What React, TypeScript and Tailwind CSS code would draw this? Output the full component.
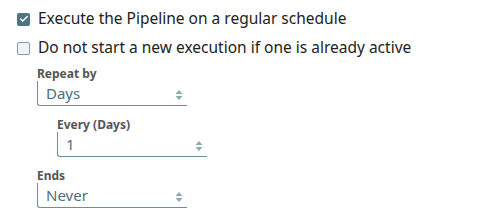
import { Check } from 'lucide-react'

function Arrows() {
  return (
    <svg width="8" height="12" viewBox="0 0 8 12" className="absolute right-1 top-[8px]">
      <path d="M4 1 L7.5 5 L0.5 5 Z" fill="#8fa8b2" />
      <path d="M4 11 L7.5 7 L0.5 7 Z" fill="#8fa8b2" />
    </svg>
  )
}

function Field({ label, value, indent }: { label: string; value: string; indent?: boolean }) {
  return (
    <div className={indent ? 'ml-5' : ''}>
      <p className="text-[12px] font-bold text-[#555] leading-[14px]">{label}</p>
      <div className="relative w-[150px] h-[25px] border-l border-b border-[#6f8e99] rounded-bl-[3px] pl-[8px]">
        <span className="text-[15px] leading-[20px] text-[#4e6d79]">{value}</span>
        <Arrows />
      </div>
    </div>
  )
}

export default function App() {
  return (
    <div className="pl-[17px] pt-[10px] text-[#222]" style={{ fontFamily: '"Noto Sans", sans-serif' }}>
      <label className="flex items-center gap-[8px] h-[18px]">
        <span className="w-[13px] h-[13px] rounded-[2px] bg-[#4f7482] flex items-center justify-center">
          <Check size={10} strokeWidth={3.5} className="text-white" />
        </span>
        <span className="text-[15.5px]">Execute the Pipeline on a regular schedule</span>
      </label>
      <label className="flex items-center gap-[8px] h-[18px] mt-[11px]">
        <span className="w-[13px] h-[13px] rounded-[2px] bg-[#eef3f6] border border-[#8a9aa5]" />
        <span className="text-[15.5px]">Do not start a new execution if one is already active</span>
      </label>
      <div className="ml-[20px] mt-[10px] flex flex-col gap-[12px]">
        <Field label="Repeat by" value="Days" />
        <Field label="Every (Days)" value="1" indent />
        <Field label="Ends" value="Never" />
      </div>
    </div>
  )
}
